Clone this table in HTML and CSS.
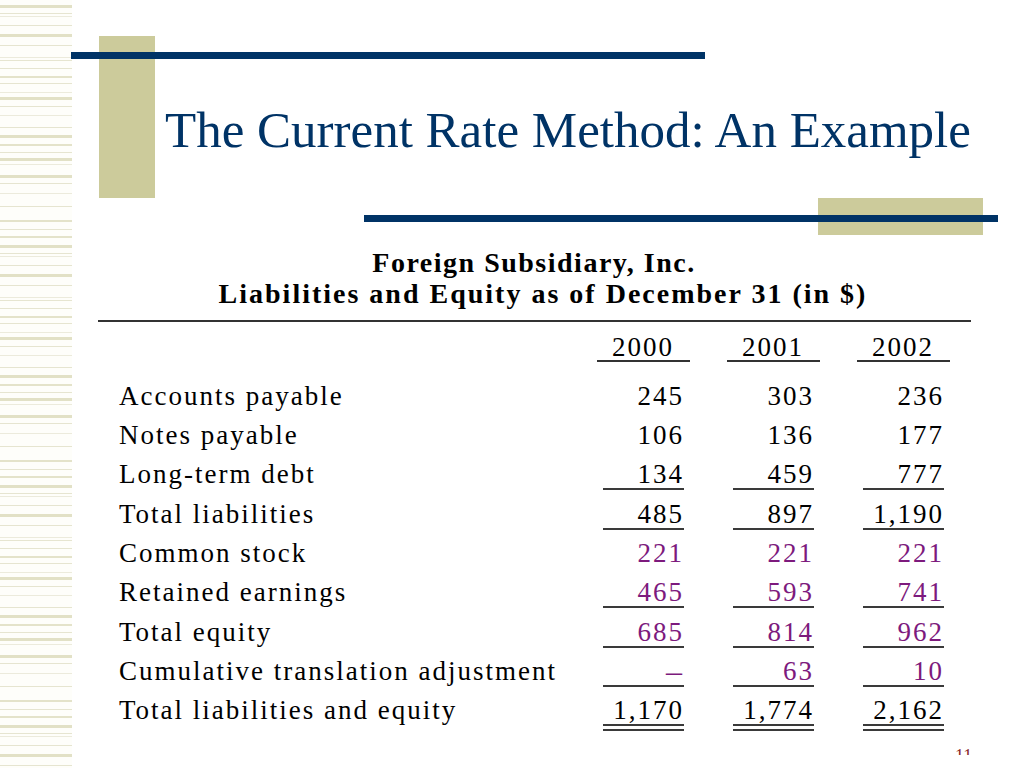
FILE: index.html
```html
<!DOCTYPE html>
<html lang="en">
<head>
<meta charset="utf-8">
<title>The Current Rate Method: An Example</title>
<link rel="stylesheet" href="styles.css">
</head>
<body>
<div class="slide">
  <aside class="stripe">
    <svg width="72" height="768" viewBox="0 0 72 768" aria-hidden="true">
      <defs>
        <pattern id="lines" x="0" y="0" width="72" height="240" patternUnits="userSpaceOnUse">
          <rect x="0" y="5" width="72" height="3" fill="#e2e1c6"/>
          <rect x="0" y="13" width="72" height="1" fill="#e6e5d0"/>
          <rect x="0" y="16" width="72" height="1" fill="#ecebdc"/>
          <rect x="0" y="25" width="72" height="1" fill="#e6e5d0"/>
          <rect x="0" y="34" width="72" height="3" fill="#e2e1c6"/>
          <rect x="0" y="45" width="72" height="1" fill="#e6e5d0"/>
          <rect x="0" y="57" width="72" height="1" fill="#ecebdc"/>
          <rect x="0" y="60" width="72" height="1" fill="#e6e5d0"/>
          <rect x="0" y="68" width="72" height="1" fill="#e6e5d0"/>
          <rect x="0" y="76" width="72" height="2" fill="#e4e3ca"/>
          <rect x="0" y="83" width="72" height="1" fill="#e6e5d0"/>
          <rect x="0" y="92" width="72" height="1" fill="#ecebdc"/>
          <rect x="0" y="97" width="72" height="3" fill="#e2e1c6"/>
          <rect x="0" y="106" width="72" height="1" fill="#e6e5d0"/>
          <rect x="0" y="115" width="72" height="1" fill="#ecebdc"/>
          <rect x="0" y="127" width="72" height="1" fill="#e6e5d0"/>
          <rect x="0" y="135" width="72" height="3" fill="#e2e1c6"/>
          <rect x="0" y="144" width="72" height="2" fill="#e4e3ca"/>
          <rect x="0" y="152" width="72" height="1" fill="#e6e5d0"/>
          <rect x="0" y="158" width="72" height="3" fill="#e2e1c6"/>
          <rect x="0" y="164" width="72" height="1" fill="#ecebdc"/>
          <rect x="0" y="175" width="72" height="3" fill="#e2e1c6"/>
          <rect x="0" y="183" width="72" height="1" fill="#e6e5d0"/>
          <rect x="0" y="193" width="72" height="1" fill="#ecebdc"/>
          <rect x="0" y="206" width="72" height="1" fill="#e6e5d0"/>
          <rect x="0" y="220" width="72" height="2" fill="#e4e3ca"/>
          <rect x="0" y="229" width="72" height="1" fill="#e6e5d0"/>
          <rect x="0" y="236" width="72" height="2" fill="#e4e3ca"/>
        </pattern>
      </defs>
      <rect x="0" y="0" width="72" height="768" fill="#fefefa"/>
      <rect x="0" y="0" width="72" height="768" fill="url(#lines)"/>
    </svg>
  </aside>

  <main class="content">
    <header class="title-area">
      <div class="olive-block tall"></div>
      <div class="navy-bar top-bar"></div>
      <h1 class="title">The Current Rate Method: An Example</h1>
    </header>

    <div class="divider">
      <div class="navy-bar mid-bar"></div>
      <div class="olive-block wide"></div>
    </div>

    <section class="statement">
      <div class="statement-head">
        <div class="head-line first">Foreign Subsidiary, Inc.</div>
        <div class="head-line second">Liabilities and Equity as of December 31 (in $)</div>
      </div>
      <div class="rule"></div>

      <div class="row years">
        <div class="label"></div>
        <div class="year">2000</div>
        <div class="year">2001</div>
        <div class="year">2002</div>
      </div>

      <div class="row">
        <div class="label">Accounts payable</div>
        <div class="num">245</div><div class="num">303</div><div class="num">236</div>
      </div>
      <div class="row">
        <div class="label">Notes payable</div>
        <div class="num">106</div><div class="num">136</div><div class="num">177</div>
      </div>
      <div class="row">
        <div class="label">Long-term debt</div>
        <div class="num ul">134</div><div class="num ul">459</div><div class="num ul">777</div>
      </div>
      <div class="row">
        <div class="label">Total liabilities</div>
        <div class="num ul">485</div><div class="num ul">897</div><div class="num ul">1,190</div>
      </div>
      <div class="row equity">
        <div class="label">Common stock</div>
        <div class="num">221</div><div class="num">221</div><div class="num">221</div>
      </div>
      <div class="row equity">
        <div class="label">Retained earnings</div>
        <div class="num ul">465</div><div class="num ul">593</div><div class="num ul">741</div>
      </div>
      <div class="row equity">
        <div class="label">Total equity</div>
        <div class="num ul">685</div><div class="num ul">814</div><div class="num ul">962</div>
      </div>
      <div class="row equity">
        <div class="label">Cumulative translation adjustment</div>
        <div class="num ul dash">–</div><div class="num ul">63</div><div class="num ul">10</div>
      </div>
      <div class="row">
        <div class="label">Total liabilities and equity</div>
        <div class="num dbl">1,170</div><div class="num dbl">1,774</div><div class="num dbl">2,162</div>
      </div>
    </section>

    <div class="page-num"><span>11</span></div>
  </main>
</div>
</body>
</html>
```

FILE: styles.css
```css
* { box-sizing: border-box; }

html, body {
  margin: 0;
  padding: 0;
  background: #ffffff;
}

body {
  width: 1024px;
  height: 768px;
  overflow: hidden;
  font-family: "Liberation Serif", "Times New Roman", serif;
  color: #000;
}

.slide {
  display: flex;
  width: 1024px;
  height: 768px;
}

.stripe {
  width: 72px;
  flex: 0 0 72px;
  height: 768px;
}

.stripe svg { display: block; }

.content {
  position: relative;
  flex: 1 1 auto;
  height: 768px;
}

/* ---------- title ---------- */
.title-area {
  position: relative;
  display: flex;
  align-items: flex-start;
  margin-top: 36px;
  padding-left: 27px;
  height: 162px;
}

.olive-block { background: #cccb9b; }
.olive-block.tall { width: 56px; height: 162px; flex: 0 0 56px; }

.navy-bar {
  position: absolute;
  height: 7px;
  background: #003366;
}

.top-bar { top: 16px; left: -1px; width: 634px; }

.title {
  margin: 69px 0 0 10px;
  font-weight: normal;
  font-size: 51px;
  line-height: 50px;
  color: #003366;
  white-space: nowrap;
}

/* ---------- divider ---------- */
.divider {
  position: relative;
  display: flex;
  height: 37px;
  padding-left: 746px;
}

.olive-block.wide { width: 165px; height: 37px; }

.mid-bar { top: 17px; left: 292px; width: 634px; }

/* ---------- statement ---------- */
.statement {
  padding-top: 12px;
  padding-left: 47px;
}

.statement-head {
  text-align: center;
  font-weight: bold;
  font-size: 28px;
  line-height: 31px;
  margin-left: -47px;
  width: 940px;
}

.head-line.first {
  letter-spacing: 1.5px;
  padding-right: 16px;
}

.head-line.second {
  letter-spacing: 2px;
  padding-left: 2px;
}

.rule {
  margin: 11px 0 0 -21px;
  width: 873px;
  height: 1.5px;
  background: #333;
}

.row {
  display: grid;
  grid-template-columns: 435px 81px 81px 81px;
  column-gap: 49px;
  font-size: 27px;
  letter-spacing: 2px;
  line-height: 28px;
}

.row > div {
  padding-top: 9.3px;
  border-bottom: 2px solid transparent;
  white-space: nowrap;
}

.row.years {
  margin-top: 12.4px;
  margin-bottom: 10.6px;
  line-height: 26px;
}

.row.years > div { padding-top: 0; }

.year {
  margin: 0 -6px;
  text-align: right;
  padding-right: 16px;
  border-bottom-color: #333 !important;
}

.num { text-align: right; }

.num.ul { border-bottom-color: #3a3a3a !important; }

.num.dbl {
  border-bottom: 7px double #3a3a3a !important;
}

.row.equity .num { color: #7d1a7d; }

.num.dash { font-size: 32px; }

/* ---------- page number ---------- */
.page-num {
  position: absolute;
  left: 883px;
  top: 747px;
  height: 8px;
  overflow: hidden;
  font-size: 18px;
  line-height: 18px;
  color: #8b2a2a;
}
```
